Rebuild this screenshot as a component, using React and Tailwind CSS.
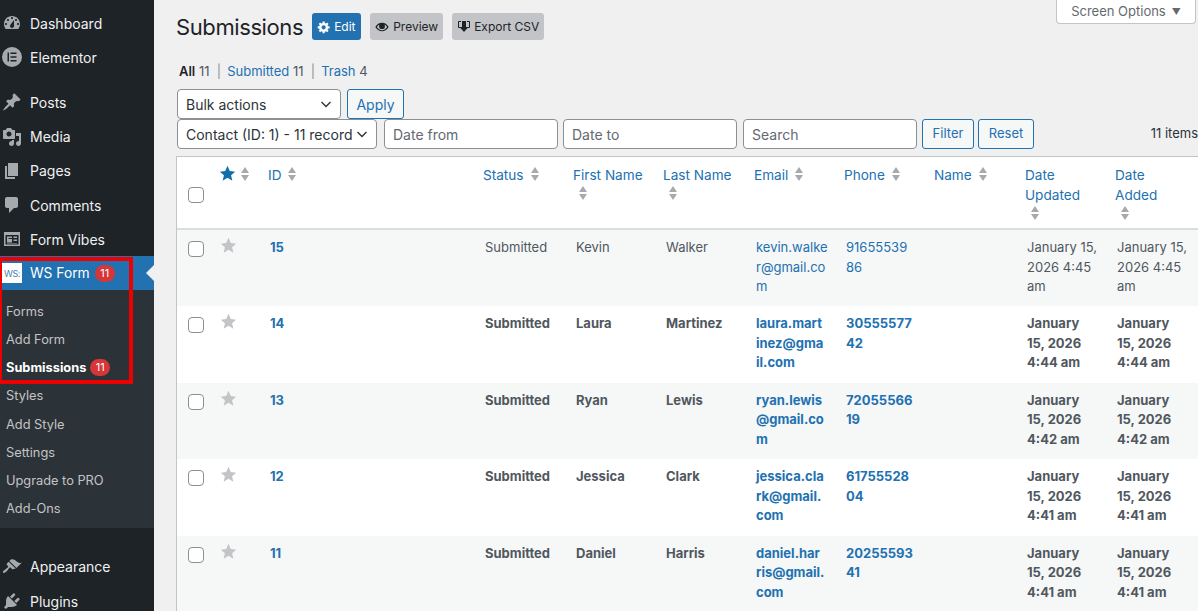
const font = { fontFamily: 'Inter, "Liberation Sans", sans-serif' };

function Dash({ d, className = 'w-5 h-5' }) {
  return (
    <svg viewBox="0 0 20 20" className={className} fill="currentColor">
      <path d={d} fillRule="evenodd" />
    </svg>
  );
}

const icons = {
  dashboard: 'M3.76 16h12.48c1.1-1.37 1.76-3.11 1.76-5 0-4.42-3.58-8-8-8s-8 3.58-8 8c0 1.89.66 3.63 1.76 5zM10 4c.55 0 1 .45 1 1s-.45 1-1 1-1-.45-1-1 .45-1 1-1zM6 6c.55 0 1 .45 1 1s-.45 1-1 1-1-.45-1-1 .45-1 1-1zm8 0c.55 0 1 .45 1 1s-.45 1-1 1-1-.45-1-1 .45-1 1-1zm-5.37 5.55L12 7v6c0 1.1-.9 2-2 2s-2-.9-2-2c0-.57.24-1.08.63-1.45zM4 10c.55 0 1 .45 1 1s-.45 1-1 1-1-.45-1-1 .45-1 1-1zm12 0c.55 0 1 .45 1 1s-.45 1-1 1-1-.45-1-1 .45-1 1-1z',
  pin: 'M10.44 3.02l1.82-1.82 6.36 6.35-1.83 1.82c-1.05-.68-2.48-.57-3.41.36l-.75.75c-.92.93-1.04 2.35-.35 3.41l-1.83 1.82-2.41-2.41-2.8 2.79c-.42.42-3.38 2.71-3.8 2.29s1.86-3.39 2.28-3.81l2.79-2.79L4.1 9.36l1.83-1.82c1.05.69 2.48.57 3.4-.36l.75-.75c.93-.92 1.05-2.35.36-3.41z',
  media: 'M13 11V4c0-.55-.45-1-1-1h-1.67L9 1H5L3.67 3H2c-.55 0-1 .45-1 1v7c0 .55.45 1 1 1h10c.55 0 1-.45 1-1zM7 4.5c1.38 0 2.5 1.12 2.5 2.5S8.38 9.5 7 9.5 4.5 8.38 4.5 7 5.62 4.5 7 4.5zM14 6h5v10.5c0 1.38-1.12 2.5-2.5 2.5S14 17.88 14 16.5s1.12-2.5 2.5-2.5c.17 0 .34.02.5.05V9h-3V6zm-4 8.05V13h2v3.5c0 1.38-1.12 2.5-2.5 2.5S7 17.88 7 16.5 8.12 14 9.5 14c.17 0 .34.02.5.05z',
  page: 'M6 15V2h10v13H6zm-1 1h8v2H3V5h2v11z',
  comments: 'M5 2h9c1.1 0 2 .9 2 2v7c0 1.1-.9 2-2 2h-2l-5 5v-5H5c-1.1 0-2-.9-2-2V4c0-1.1.9-2 2-2z',
  appearance: 'M14.48 11.06L7.41 3.99l1.5-1.5c.5-.56 2.3-.47 3.51.32 1.21.8 1.43 1.28 2.91 2.1 1.18.64 2.45 1.26 4.45.85zm-.71.71L6.7 4.7 4.93 6.47c-.39.39-.39 1.02 0 1.41l1.06 1.06c.39.39.39 1.03 0 1.42-.6.6-1.43 1.11-2.21 1.69-.35.26-.7.53-1.01.84C1.43 13.23.4 14.84 1.19 15.63c.79.79 2.4-.24 3.74-1.58.31-.31.58-.66.84-1.01.58-.78 1.09-1.61 1.69-2.21.39-.39 1.03-.39 1.42 0l1.06 1.06c.39.39 1.02.39 1.41 0z',
  plugins: 'M13.11 4.36L9.87 7.6 8 5.73l3.24-3.24c.35-.34 1.05-.2 1.56.32.52.51.66 1.21.31 1.55zm-8 1.77l.91-1.12 9.01 9.01-1.19.84c-.71.71-2.63 1.16-3.82 1.16H6.14L4.9 17.26c-.59.59-1.54.59-2.12 0-.59-.58-.59-1.53 0-2.12l1.24-1.24v-3.88c0-1.13.4-3.19 1.09-3.89zm7.26 3.97l3.24-3.24c.34-.35 1.04-.21 1.55.31.52.51.66 1.21.31 1.55l-3.24 3.25z',
  gear: 'M18 12h-2.18c-.17.7-.44 1.35-.81 1.93l1.54 1.54-2.1 2.1-1.54-1.54c-.58.36-1.23.63-1.91.79V19H8v-2.18c-.68-.16-1.33-.43-1.91-.79l-1.54 1.54-2.12-2.12 1.54-1.54c-.36-.58-.63-1.23-.79-1.91H1V9.03h2.17c.16-.7.44-1.35.8-1.94L2.43 5.55l2.1-2.1 1.54 1.54c.58-.37 1.24-.64 1.93-.81V2h3v2.18c.68.16 1.33.43 1.91.79l1.54-1.54 2.12 2.12-1.54 1.54c.36.59.64 1.24.8 1.94H18V12zm-8.5 1.5c1.66 0 3-1.34 3-3s-1.34-3-3-3-3 1.34-3 3 1.34 3 3 3z',
  eye: 'M10 4C6 4 2.5 6.2.5 10c2 3.8 5.500 6 9.500 6s7.500-2.200 9.500-6C17.500 6.200 14 4 10 4zm0 10.500c-3 0-5.700-1.600-7.300-4.500.9-1.600 2.200-2.800 3.800-3.600-.4.700-.7 1.500-.7 2.400a4.200 4.200 0 0 0 8.400 0c0-.9-.3-1.700-.7-2.400 1.600.8 2.900 2 3.800 3.600-1.600 2.900-4.300 4.500-7.300 4.500z',
  star: 'M10 1l2.700 6.200 6.300.6-4.800 4.200 1.500 6.500L10 15.100 4.300 18.500l1.500-6.500L1 7.800l6.300-.6z',
  elementor: 'M10 0a10 10 0 1 0 0 20 10 10 0 0 0 0-20zM7 14.500H5.500v-9H7v9zm7.500 0h-6V13h6v1.500zm0-3.750h-6v-1.500h6v1.500zm0-3.750h-6V5.500h6V7z',
  formVibes: 'M2 3h16v14H2V3zm1.500 3v9.500h13V6h-13zM5 7.500h5V9H6.500v1H10v3.500H5v-6zm6.500 0H15V9h-3.500V7.500zm0 3H15V12h-3.500v-1.500zM5 14h10v.5H5V14z',
};

function Badge({ n }) {
  return (
    <span className="inline-flex items-center justify-center w-[20px] h-[17px] rounded-full bg-[#d63638] text-white text-[11px] leading-none font-normal">
      {n}
    </span>
  );
}

function MenuItem({ icon, label }) {
  return (
    <div className="flex items-center h-[34.2px] text-[14px] text-[#f0f0f1]">
      <span className="w-[30px] pl-[2px] text-[#a7aaad] shrink-0">
        <Dash d={icons[icon]} />
      </span>
      {label}
    </div>
  );
}

function SubItem({ children, bold }) {
  return (
    <div className={`flex items-center gap-[4px] h-[28.2px] pl-[6px] text-[12.8px] ${bold ? 'font-bold text-white' : 'text-[#c3c4c7]'}`}>
      {children}
    </div>
  );
}

function Sidebar() {
  return (
    <aside className="relative w-[154px] shrink-0 bg-[#1d2327] h-[611px] overflow-hidden pt-[6px]">
      <MenuItem icon="dashboard" label="Dashboard" />
      <MenuItem icon="elementor" label="Elementor" />
      <div className="h-[11px]" />
      <MenuItem icon="pin" label="Posts" />
      <MenuItem icon="media" label="Media" />
      <MenuItem icon="page" label="Pages" />
      <MenuItem icon="comments" label="Comments" />
      <MenuItem icon="formVibes" label="Form Vibes" />
      <div className="relative flex items-center h-[34px] bg-[#2271b1] text-white text-[13.8px]">
        <span className="ml-[2px] mr-[8px] w-[20px] h-[20px] bg-white text-[#4a7fae] text-[9px] flex items-center justify-center tracking-tighter">WS:</span>
        WS Form
        <span className="ml-[5px] flex"><Badge n="11" /></span>
        <span className="absolute right-0 top-[9px] w-0 h-0 border-y-8 border-y-transparent border-r-8 border-r-[#f0f0f1]" />
      </div>
      <div className="bg-[#2c3338] pt-[7px] pb-[5px]">
        <SubItem>Forms</SubItem>
        <SubItem>Add Form</SubItem>
        <SubItem bold>Submissions <Badge n="11" /></SubItem>
        <SubItem>Styles</SubItem>
        <SubItem>Add Style</SubItem>
        <SubItem>Settings</SubItem>
        <SubItem>Upgrade to PRO</SubItem>
        <SubItem>Add-Ons</SubItem>
      </div>
      <div className="h-[22px]" />
      <MenuItem icon="appearance" label="Appearance" />
      <MenuItem icon="plugins" label="Plugins" />
      {/* red annotation box from the screenshot */}
      <div className="absolute -left-[2px] top-[257px] w-[135px] h-[127px] border-4 border-[#ee0000]" />
    </aside>
  );
}

function Chevron() {
  return (
    <svg viewBox="0 0 12 12" className="w-3 h-3 text-[#2c3338] shrink-0" fill="none" stroke="currentColor" strokeWidth="1.4">
      <path d="M1.5 4l4.500 4.500L10.500 4" />
    </svg>
  );
}

function FakeSelect({ label, className }) {
  return (
    <div className={`flex items-center justify-between h-[30px] bg-white border border-[#8c8f94] rounded-[4px] pl-[8px] pr-[8px] text-[14px] text-[#2c3338] whitespace-nowrap overflow-hidden ${className}`}>
      <span>{label}</span>
      <Chevron />
    </div>
  );
}

function FakeInput({ placeholder, className }) {
  return (
    <div className={`flex items-center h-[30px] bg-white border border-[#8c8f94] rounded-[4px] pl-[8px] text-[14px] text-[#646970] ${className}`}>
      {placeholder}
    </div>
  );
}

function OutlineBtn({ children, className }) {
  return (
    <button className={`h-[30px] bg-[#f6f7f7] border border-[#2271b1] rounded-[3px] text-[#2271b1] ${className}`}>
      {children}
    </button>
  );
}

function Sort({ className = '' }) {
  return (
    <svg viewBox="0 0 10 16" className={`w-[10px] h-[16px] text-[#a7aaad] inline-block shrink-0 ${className}`} fill="currentColor">
      <path d="M5 1l4 6H1zM5 15l4-6H1z" />
    </svg>
  );
}

function Heading({ lines, wrapSort }) {
  return (
    <th className="align-top text-left font-normal px-[8px] pt-[8px] pb-0 text-[13.6px] leading-[20px] text-[#2271b1] border-b-2 border-[#dcdcde]">
      {lines.map((l, i) => <div key={i} className="whitespace-nowrap">{l}{!wrapSort && <Sort className="ml-[6px] align-[-2px]" />}</div>)}
      {wrapSort && <div className="h-[16px] leading-none pl-[5px]"><Sort /></div>}
    </th>
  );
}

const rows = [
  { id: 15, first: 'Kevin', last: 'Walker', email: ['kevin.walke', 'r@gmail.co', 'm'], phone: ['91655539', '86'], date: ['January 15,', '2026 4:45', 'am'] },
  { id: 14, first: 'Laura', last: 'Martinez', email: ['laura.mart', 'inez@gma', 'il.com'], phone: ['30555577', '42'], date: ['January', '15, 2026', '4:44 am'], bold: true },
  { id: 13, first: 'Ryan', last: 'Lewis', email: ['ryan.lewis', '@gmail.co', 'm'], phone: ['72055566', '19'], date: ['January', '15, 2026', '4:42 am'], bold: true },
  { id: 12, first: 'Jessica', last: 'Clark', email: ['jessica.cla', 'rk@gmail.', 'com'], phone: ['61755528', '04'], date: ['January', '15, 2026', '4:41 am'], bold: true },
  { id: 11, first: 'Daniel', last: 'Harris', email: ['daniel.har', 'ris@gmail.', 'com'], phone: ['20255593', '41'], date: ['January', '15, 2026', '4:41 am'], bold: true },
];

function Lines({ lines }) {
  return lines.map((l, i) => <div key={i} className="whitespace-nowrap">{l}</div>);
}

function Checkbox() {
  return <span className="block w-4 h-4 bg-white border border-[#8c8f94] rounded-[4px]" />;
}

function Row({ row, odd }) {
  const weight = row.bold ? 'font-bold' : 'font-normal';
  const cell = 'align-top px-[10px] pt-[8px] h-[76.4px]';
  const nameCell = 'align-top pl-[11px] pr-[9px] pt-[8px] h-[76.4px]';
  return (
    <tr className={`${odd ? 'bg-[#f6f7f7]' : 'bg-white'} ${weight} text-[13px] leading-[19.5px] text-[#50575e]`}>
      <td className="align-top pl-[11px] pt-[11px]"><Checkbox /></td>
      <td className="align-top pl-[9px] pt-[7px] text-[#c3c4c7]"><Dash d={icons.star} className="w-[17px] h-[17px]" /></td>
      <td className={`${cell} text-[#2271b1] font-bold`}>{row.id}</td>
      <td className={cell}>Submitted</td>
      <td className={nameCell}>{row.first}</td>
      <td className={nameCell}>{row.last}</td>
      <td className={`${cell} text-[#2271b1]`}><Lines lines={row.email} /></td>
      <td className={`${cell} text-[#2271b1]`}><Lines lines={row.phone} /></td>
      <td className={cell} />
      <td className={cell}><Lines lines={row.date} /></td>
      <td className={cell}><Lines lines={row.date} /></td>
    </tr>
  );
}

function Main() {
  return (
    <main className="relative flex-1 min-w-0 bg-[#f0f0f1] pl-[23px] overflow-hidden">
      <div className="absolute right-[2px] top-0 w-[140px] h-[24px] bg-white border border-t-0 border-[#c3c4c7] rounded-b-[4px] flex items-center justify-center gap-[6px] text-[13px] text-[#646970]">
        Screen Options
        <span className="text-[9px] leading-none">▼</span>
      </div>

      <div className="flex items-start gap-[9px] pt-[13px] h-[54px] -ml-[1px]">
        <h1 className="text-[22px] leading-[29px] tracking-[-0.4px] font-normal text-[#1d2327]">Submissions</h1>
        <div className="flex items-center gap-[9px]">
          <span className="flex items-center gap-[3px] h-[27px] px-[5px] w-[49px] bg-[#2271b1] text-white rounded-[3px] text-[12px]">
            <Dash d={icons.gear} className="w-[14px] h-[14px]" /> Edit
          </span>
          <span className="flex items-center gap-[4px] h-[27px] px-[5px] bg-[#c3c4c7] text-[#1d2327] rounded-[3px] text-[12px]">
            <Dash d={icons.eye} className="w-[14px] h-[14px]" /> Preview
          </span>
          <span className="flex items-center gap-[3px] h-[27px] px-[5px] bg-[#c3c4c7] text-[#1d2327] rounded-[3px] text-[12px]">
            <svg viewBox="0 0 14 14" className="w-[14px] h-[14px]" fill="none" stroke="currentColor">
              <path d="M4 1.500H1.500v6H4M10 1.500h2.500v6H10" />
              <path d="M5 1h4v6h2.500L7 12 2.500 7H5z" fill="currentColor" stroke="none" />
            </svg>
            Export CSV
          </span>
        </div>
      </div>

      <div className="flex items-center h-[20px] mt-[8px] ml-[2px] text-[13px] text-[#50575e]">
        <b className="text-[#1d2327] font-semibold">All</b>&nbsp;11&nbsp;&nbsp;<span className="text-[#8c8f94] mr-[6px]">|</span><span className="text-[#2271b1]">Submitted</span>&nbsp;11&nbsp;&nbsp;<span className="text-[#8c8f94] mr-[6px]">|</span><span className="text-[#2271b1]">Trash</span>&nbsp;4
      </div>

      <div className="flex items-center gap-[6px] mt-[7px]">
        <FakeSelect label="Bulk actions" className="w-[164px]" />
        <OutlineBtn className="w-[57px] text-[14px]">Apply</OutlineBtn>
      </div>
      <div className="relative flex items-center">
        <FakeSelect label="Contact (ID: 1) - 11 record" className="w-[200px] mr-[7px] pr-[7px]" />
        <FakeInput placeholder="Date from" className="w-[174px] mr-[5px]" />
        <FakeInput placeholder="Date to" className="w-[174px] mr-[6px]" />
        <FakeInput placeholder="Search" className="w-[174px] mr-[5px]" />
        <OutlineBtn className="w-[52px] text-[13px] mr-[4px]">Filter</OutlineBtn>
        <OutlineBtn className="w-[56px] text-[13px]">Reset</OutlineBtn>
        <span className="ml-auto text-[13px] text-[#2c3338] whitespace-nowrap">11 items</span>
      </div>

      <table className="table-fixed border-separate border-spacing-0 w-[1022px] mt-[7px] -ml-[1px] bg-white border-l border-t border-[#c3c4c7]">
        <colgroup>
          <col className="w-[34px]" />
          <col className="w-[49px]" />
          <col className="w-[215px]" />
          <col className="w-[90px]" />
          <col className="w-[90px]" />
          <col className="w-[91px]" />
          <col className="w-[90px]" />
          <col className="w-[90px]" />
          <col className="w-[91px]" />
          <col className="w-[90px]" />
          <col className="w-[91px]" />
        </colgroup>
        <thead>
          <tr className="h-[73px]">
            <th className="align-top pl-[11px] pt-[30px] border-b-2 border-[#dcdcde]"><Checkbox /></th>
            <th className="align-top pl-[8px] pt-[8px] border-b-2 border-[#dcdcde]">
              <div className="flex items-center gap-[4px]">
                <span className="text-[#0f6fa8]"><Dash d={icons.star} className="w-[17px] h-[17px]" /></span>
                <Sort />
              </div>
            </th>
            <Heading lines={['ID']} />
            <Heading lines={['Status']} />
            <Heading lines={['First Name']} wrapSort />
            <Heading lines={['Last Name']} wrapSort />
            <Heading lines={['Email']} />
            <Heading lines={['Phone']} />
            <Heading lines={['Name']} />
            <Heading lines={['Date', 'Updated']} wrapSort />
            <Heading lines={['Date', 'Added']} wrapSort />
          </tr>
        </thead>
        <tbody>
          {rows.map((r, i) => <Row key={r.id} row={r} odd={i % 2 === 0} />)}
        </tbody>
      </table>
    </main>
  );
}

export default function App() {
  return (
    <div className="flex h-[611px] w-full overflow-hidden" style={font}>
      <Sidebar />
      <Main />
    </div>
  );
}
